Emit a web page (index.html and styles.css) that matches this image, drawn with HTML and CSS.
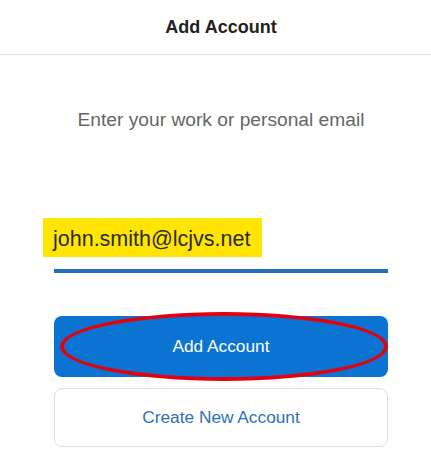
FILE: index.html
```html
<!DOCTYPE html>
<html>
<head>
<meta charset="utf-8">
<link rel="stylesheet" href="styles.css">
</head>
<body>
<header class="topbar"><h1 class="title">Add Account</h1></header>
<main class="content">
  <p class="prompt">Enter your work or personal email</p>
  <div class="field">
    <span class="email">john.smith@lcjvs.net</span>
    <div class="underline"></div>
  </div>
  <div class="actions">
    <button class="btn primary">Add Account<span class="circle"></span></button>
    <button class="btn secondary">Create New Account</button>
  </div>
</main>
</body>
</html>
```
FILE: styles.css
```css
* { box-sizing: border-box; }
html, body { margin: 0; padding: 0; background: #fff; }
body {
  width: 431px;
  height: 466px;
  overflow: hidden;
  font-family: "Liberation Sans", Arial, sans-serif;
}
.topbar {
  height: 55px;
  border-bottom: 1px solid #dcdcdc;
  display: flex;
  align-items: center;
  justify-content: center;
  padding-left: 11px;
}
.title {
  margin: 0;
  font-size: 18px;
  font-weight: bold;
  color: #222;
  line-height: 22px;
}
.content {
  padding: 0 43px 0 54px;
}
.prompt {
  margin: 54px 0 0 0;
  text-align: center;
  font-size: 19.2px;
  line-height: 22px;
  color: #666;
}
.field {
  margin-top: 87px;
}
.email {
  display: inline-block;
  margin-left: -11px;
  background: #ffe500;
  padding: 10px 12px 6px 10px;
  font-size: 21.5px;
  line-height: 23px;
  color: #2b2b2b;
}
.underline {
  margin-top: 12px;
  height: 4px;
  background: #2170b8;
}
.actions {
  margin-top: 43px;
  display: flex;
  flex-direction: column;
  gap: 11px;
}
.btn {
  font-family: "Liberation Sans", Arial, sans-serif;
  font-size: 17.3px;
  border-radius: 8px;
  width: 100%;
  cursor: pointer;
}
.primary {
  position: relative;
  height: 61px;
  background: #0b74d3;
  color: #fff;
  border: none;
}
.secondary {
  height: 59px;
  background: #fff;
  color: #2e70b3;
  border: 1px solid #dadee4;
}
.circle {
  position: absolute;
  left: 6px;
  top: -4px;
  width: 328px;
  height: 69px;
  border: 4px solid #e3000f;
  border-radius: 50%;
  pointer-events: none;
}
```
